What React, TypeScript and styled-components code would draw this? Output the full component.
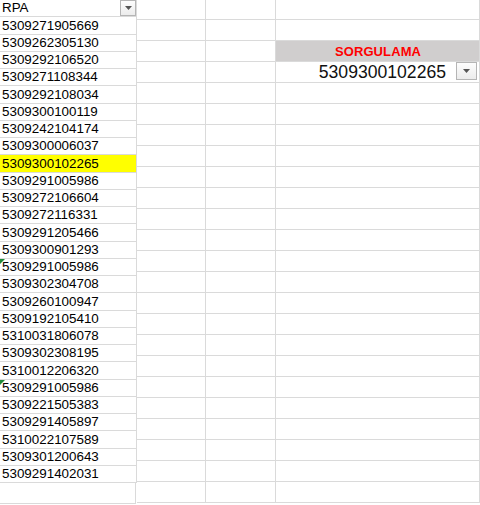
import React from "react";
import styled, { createGlobalStyle } from "styled-components";

const GlobalStyle = createGlobalStyle`
  html, body {
    margin: 0;
    padding: 0;
    background: #fff;
  }
  body {
    font-family: "Liberation Sans", Arial, sans-serif;
    color: #000;
  }
`;

const Sheet = styled.div`
  display: flex;
  width: 480px;
  height: 505px;
  overflow: hidden;
  background: #fff;
`;

const ListColumn = styled.div`
  display: flex;
  flex-direction: column;
  width: 137px;
  flex-shrink: 0;
`;

const ListCell = styled.div<{ $highlight?: boolean }>`
  position: relative;
  box-sizing: border-box;
  height: 17.25px;
  display: flex;
  align-items: center;
  justify-content: space-between;
  padding-left: 2px;
  border-bottom: 1px solid #dadada;
  border-right: 1px solid #dadada;
  background: ${(p) => (p.$highlight ? "#ffff00" : "#fff")};
  font-size: 13.4px;
  line-height: 1;
  white-space: nowrap;
`;

const EmptyListCell = styled.div`
  box-sizing: border-box;
  height: 21px;
  width: 136px;
  border-bottom: 1px solid #dadada;
  border-right: 1px solid #dadada;
`;

const ErrorFlag = styled.span`
  position: absolute;
  left: 0;
  top: 0;
  width: 0;
  height: 0;
  border-top: 5px solid #1f8a3a;
  border-right: 5px solid transparent;
`;

const FilterButton = styled.button<{ $w: number; $h: number }>`
  box-sizing: border-box;
  width: ${(p) => p.$w}px;
  height: ${(p) => p.$h}px;
  margin: 0;
  padding: 0;
  display: flex;
  align-items: center;
  justify-content: center;
  border: 1px solid #b5b5b5;
  background: linear-gradient(#fdfdfd, #ececec);
  align-self: flex-start;
  flex-shrink: 0;
`;

const Grid = styled.div`
  display: grid;
  grid-template-columns: 69px 70px 204px;
  grid-template-rows: 20px repeat(23, 21px);
`;

const GridCell = styled.div<{ $fill?: string }>`
  box-sizing: border-box;
  border-bottom: 1px solid #dadada;
  border-right: 1px solid #dadada;
  background: ${(p) => p.$fill || "#fff"};
`;

const TitleCell = styled(GridCell)`
  display: flex;
  align-items: center;
  justify-content: center;
  color: #ff0000;
  font-weight: bold;
  font-size: 13px;
  letter-spacing: 0.1px;
  padding-left: 1px;
`;

const ValueCell = styled(GridCell)`
  display: flex;
  align-items: center;
  justify-content: flex-end;
  gap: 10px;
  padding-right: 2px;
  font-size: 17.6px;
  color: #111;
`;

const Arrow = () => (
  <svg width="7" height="4" viewBox="0 0 7 4">
    <path d="M0 0 H7 L3.5 4 Z" fill="#555" />
  </svg>
);

const values = [
  "5309271905669",
  "5309262305130",
  "5309292106520",
  "5309271108344",
  "5309292108034",
  "5309300100119",
  "5309242104174",
  "5309300006037",
  "5309300102265",
  "5309291005986",
  "5309272106604",
  "5309272116331",
  "5309291205466",
  "5309300901293",
  "5309291005986",
  "5309302304708",
  "5309260100947",
  "5309192105410",
  "5310031806078",
  "5309302308195",
  "5310012206320",
  "5309291005986",
  "5309221505383",
  "5309291405897",
  "5310022107589",
  "5309301200643",
  "5309291402031",
];

const flagged = [14, 21];
const selected = "5309300102265";

export default function App() {
  const cells = [];
  for (let r = 0; r < 24; r++) {
    for (let c = 0; c < 3; c++) {
      const key = `${r}-${c}`;
      if (r === 2 && c === 2) {
        cells.push(
          <TitleCell key={key} $fill="#d0cece">
            SORGULAMA
          </TitleCell>
        );
      } else if (r === 3 && c === 2) {
        cells.push(
          <ValueCell key={key}>
            <span>{selected}</span>
            <FilterButton $w={21} $h={18}>
              <Arrow />
            </FilterButton>
          </ValueCell>
        );
      } else {
        cells.push(<GridCell key={key} />);
      }
    }
  }

  return (
    <>
      <GlobalStyle />
      <Sheet>
        <ListColumn>
          <ListCell>
            <span>RPA</span>
            <FilterButton $w={16} $h={16}>
              <Arrow />
            </FilterButton>
          </ListCell>
          {values.map((v, i) => (
            <ListCell key={i} $highlight={i === 8}>
              {flagged.includes(i) && <ErrorFlag />}
              <span>{v}</span>
            </ListCell>
          ))}
          <EmptyListCell />
        </ListColumn>
        <Grid>{cells}</Grid>
      </Sheet>
    </>
  );
}
